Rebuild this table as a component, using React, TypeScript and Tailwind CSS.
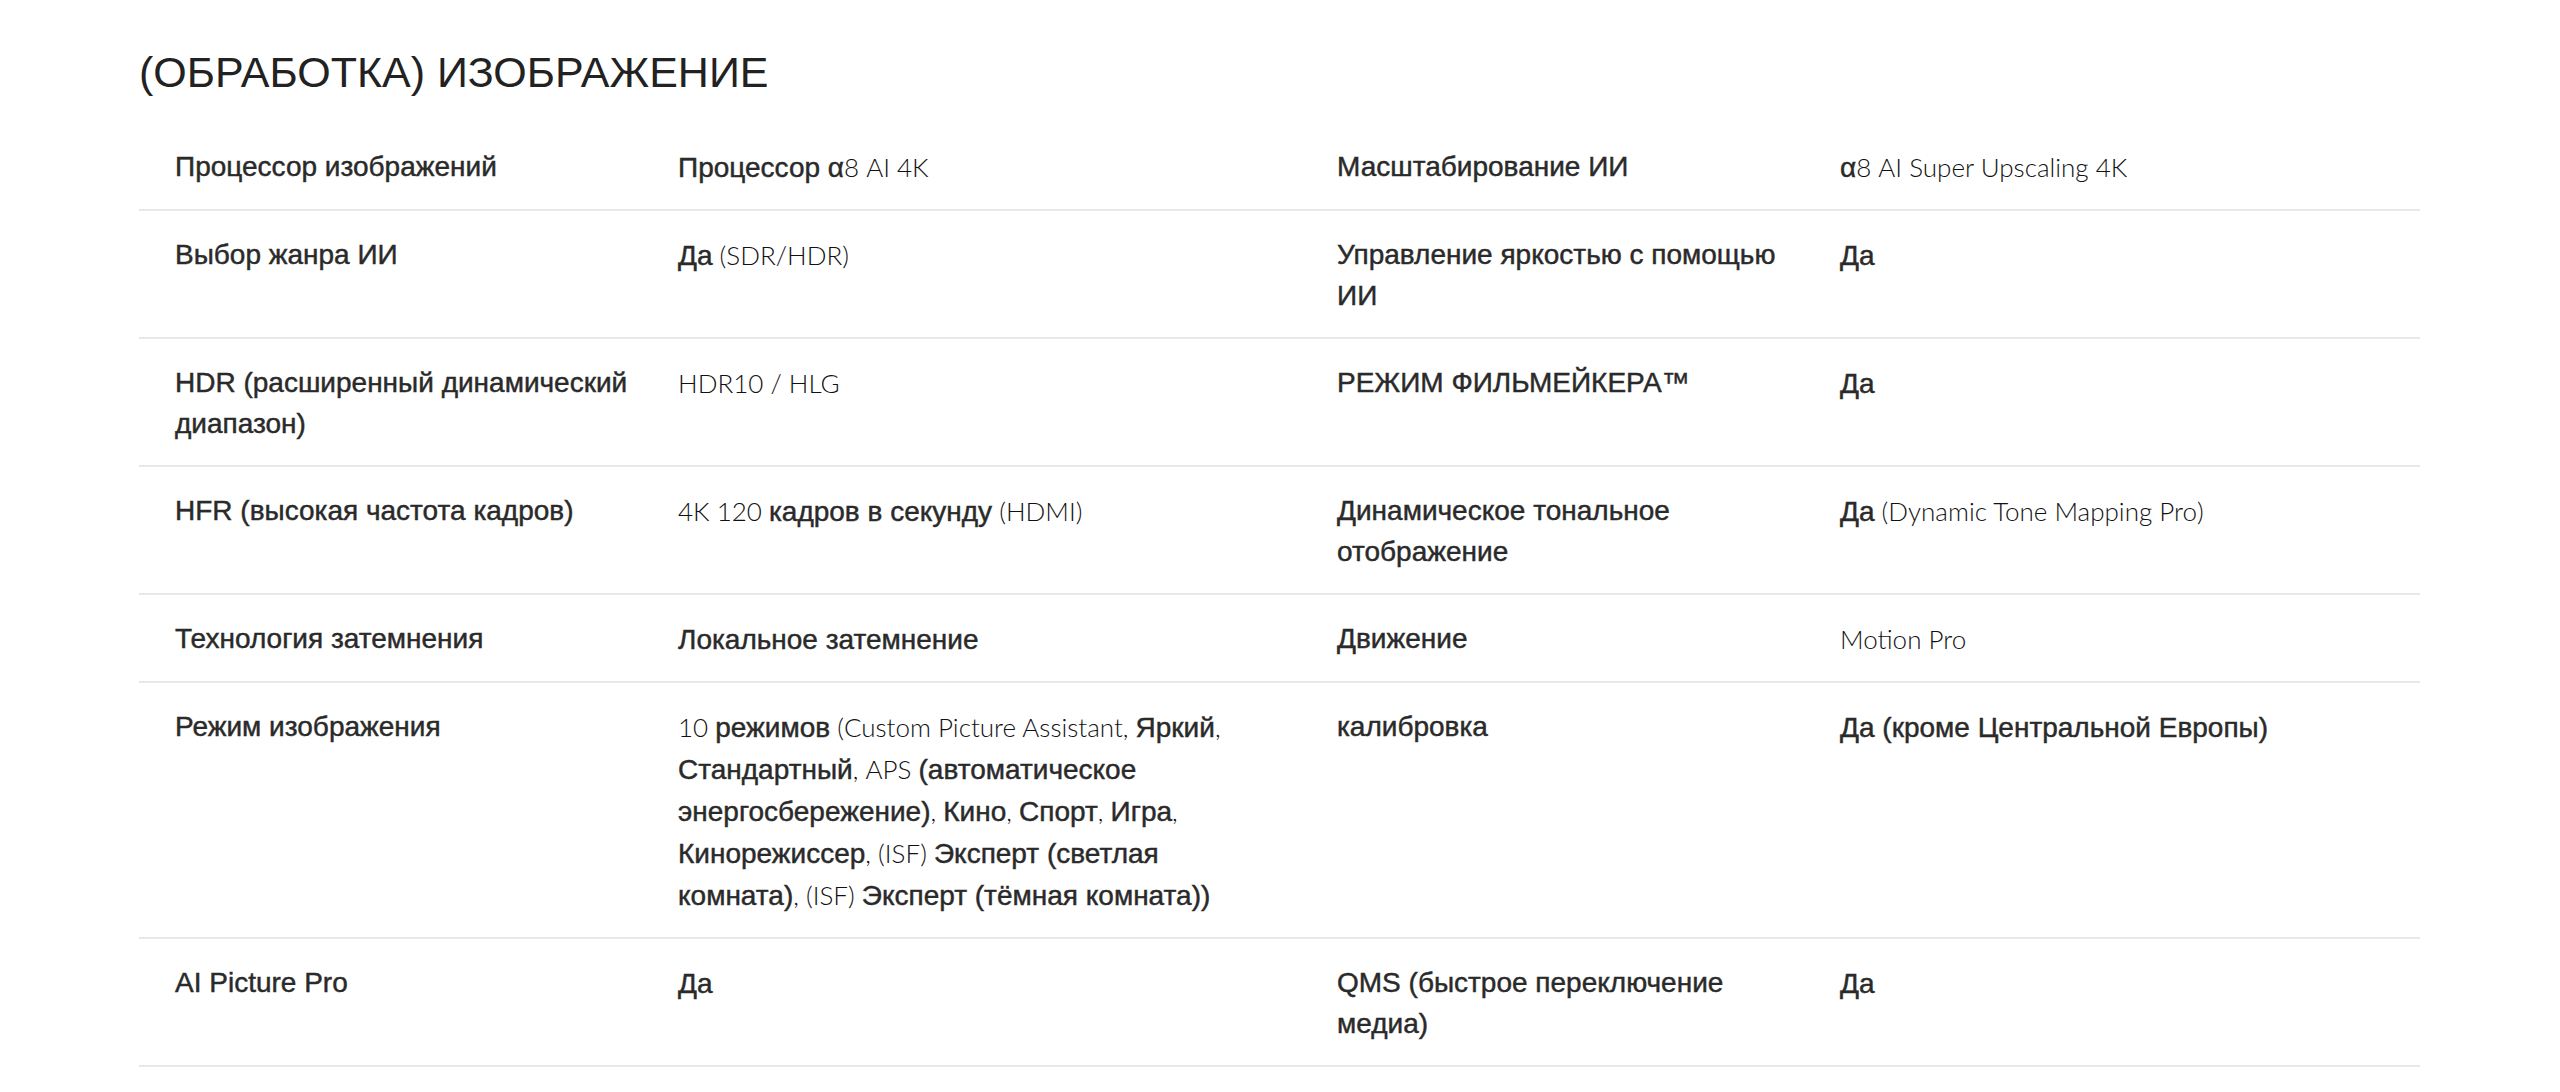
import React from "react";

const rows: [string, string, string, string][] = [
  ["Процессор изображений", "Процессор α8 AI 4K", "Масштабирование ИИ", "α8 AI Super Upscaling 4K"],
  ["Выбор жанра ИИ", "Да (SDR/HDR)", "Управление яркостью с помощью ИИ", "Да"],
  ["HDR (расширенный динамический диапазон)", "HDR10 / HLG", "РЕЖИМ ФИЛЬМЕЙКЕРА™", "Да"],
  ["HFR (высокая частота кадров)", "4K 120 кадров в секунду (HDMI)", "Динамическое тональное отображение", "Да (Dynamic Tone Mapping Pro)"],
  ["Технология затемнения", "Локальное затемнение", "Движение", "Motion Pro"],
  [
    "Режим изображения",
    "10 режимов (Custom Picture Assistant, Яркий, Стандартный, APS (автоматическое энергосбережение), Кино, Спорт, Игра, Кинорежиссер, (ISF) Эксперт (светлая комната), (ISF) Эксперт (тёмная комната))",
    "калибровка",
    "Да (кроме Центральной Европы)",
  ],
  ["AI Picture Pro", "Да", "QMS (быстрое переключение медиа)", "Да"],
];

const CYR = /\(?[\u0370-\u04FF]+(?:[ ()]+[\u0370-\u04FF]+)*\)*/g;

const heavy = "font-['Liberation_Sans',Arial,sans-serif] text-[28px] font-normal [-webkit-text-stroke:0.45px_#2a2a2a]";
const light = "font-['Lato','Liberation_Sans',sans-serif] text-[26px] font-light text-[#111]";

function Value({ text }: { text: string }) {
  const parts: React.ReactNode[] = [];
  let last = 0;
  let m: RegExpExecArray | null;
  let i = 0;
  CYR.lastIndex = 0;
  while ((m = CYR.exec(text)) !== null) {
    if (m.index > last) {
      parts.push(
        <span key={i++} className={light}>
          {text.slice(last, m.index)}
        </span>
      );
    }
    parts.push(
      <span key={i++} className={heavy}>
        {m[0]}
      </span>
    );
    last = m.index + m[0].length;
  }
  if (last < text.length) {
    parts.push(
      <span key={i++} className={light}>
        {text.slice(last)}
      </span>
    );
  }
  return <div className="pr-[79px]">{parts}</div>;
}

export default function App() {
  return (
    <div className="min-h-[1092px] w-full bg-white pl-[139px] pr-[140px] pt-[50px] text-[#2a2a2a]">
      <h2 className="mb-[29px] font-['Liberation_Sans',Arial,sans-serif] text-[43px] font-normal leading-[44px] text-[#222]">
        (ОБРАБОТКА) ИЗОБРАЖЕНИЕ
      </h2>
      <div className="w-full">
        {rows.map((r, idx) => (
          <div
            key={idx}
            className="grid grid-cols-[503px_659px_503px_1fr] border-b-2 border-[#e8e8e8] pl-[36px] pt-[23px] pb-[21px] text-[28px] leading-[41px]"
          >
            <div className={"pr-[30px] " + heavy}>{r[0]}</div>
            <Value text={r[1]} />
            <div className={"pr-[30px] " + heavy}>{r[2]}</div>
            <Value text={r[3]} />
          </div>
        ))}
      </div>
    </div>
  );
}
